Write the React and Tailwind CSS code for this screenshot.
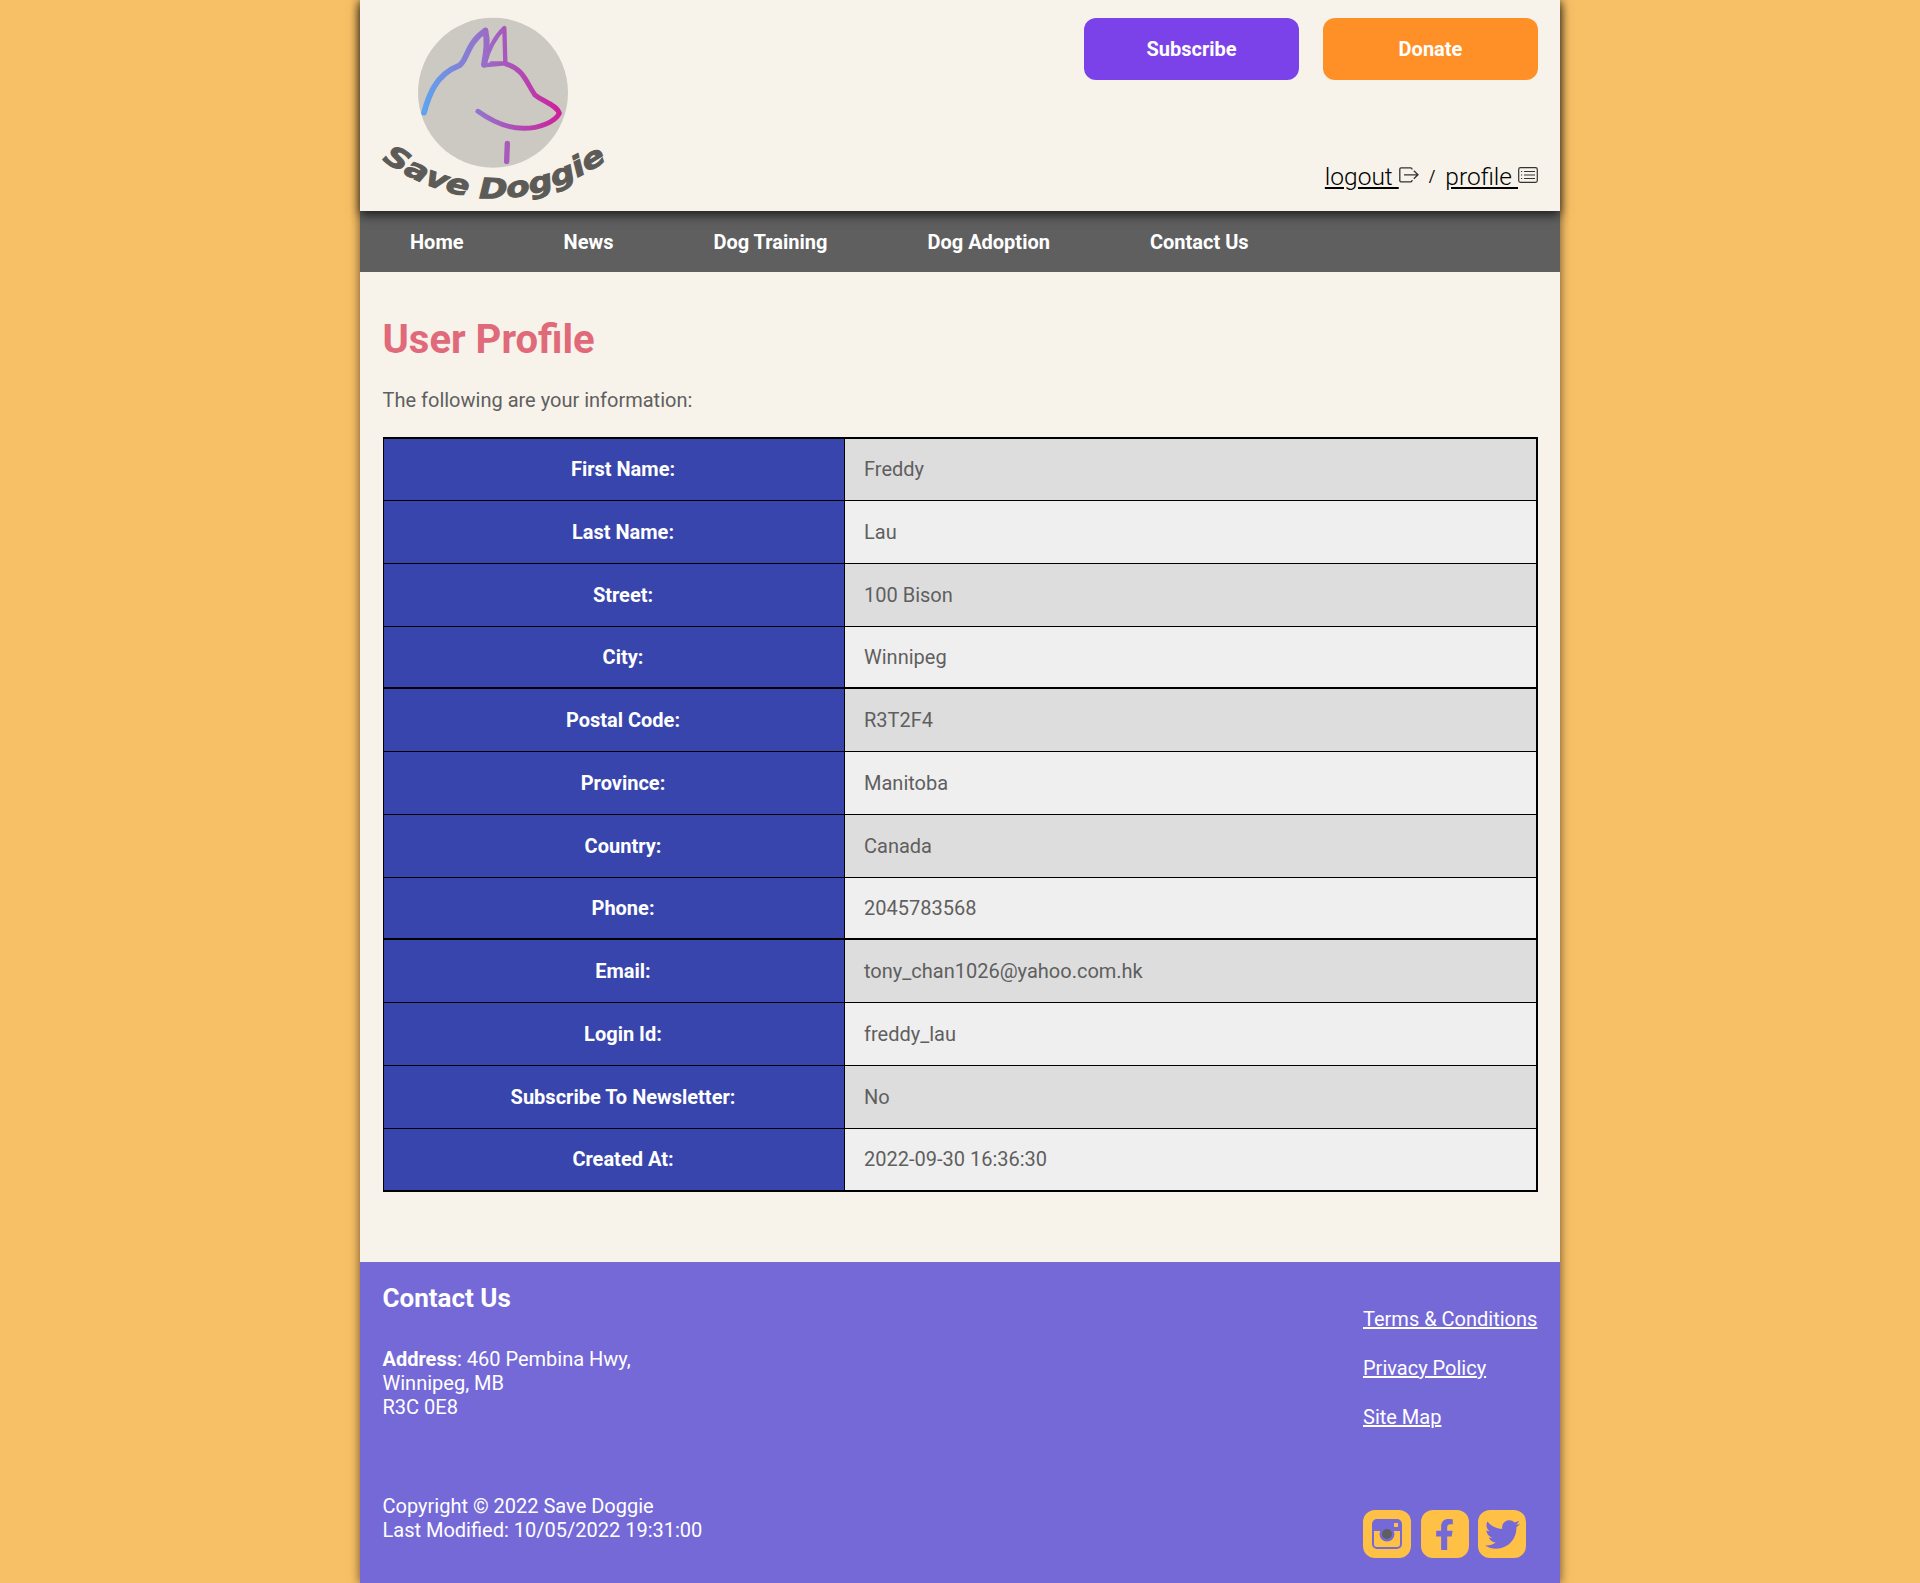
import { FaFacebookF, FaTwitter } from 'react-icons/fa';

const navLinks = ['Home', 'News', 'Dog Training', 'Dog Adoption', 'Contact Us'];

const profile = [
  ['First Name:', 'Freddy'],
  ['Last Name:', 'Lau'],
  ['Street:', '100 Bison'],
  ['City:', 'Winnipeg'],
  ['Postal Code:', 'R3T2F4'],
  ['Province:', 'Manitoba'],
  ['Country:', 'Canada'],
  ['Phone:', '2045783568'],
  ['Email:', 'tony_chan1026@yahoo.com.hk'],
  ['Login Id:', 'freddy_lau'],
  ['Subscribe To Newsletter:', 'No'],
  ['Created At:', '2022-09-30 16:36:30'],
];

function Logo() {
  return (
    <svg viewBox="0 0 900 633" className="block w-[300px] h-[211px]">
      <defs>
        <linearGradient id="dog" gradientUnits="userSpaceOnUse" x1="190" y1="0" x2="605" y2="0">
          <stop offset="0" stopColor="#5ea3f0" />
          <stop offset="0.45" stopColor="#9a6cc8" />
          <stop offset="1" stopColor="#cf1f9b" />
        </linearGradient>
        <path id="arc" d="M62 478 Q400 712 745 478" />
      </defs>
      <circle cx="399" cy="278" r="225" fill="#ccc9c2" />
      <g fill="none" stroke="url(#dog)" strokeLinecap="round" strokeLinejoin="round">
        <path strokeWidth="17" d="M192 338 C205 290 225 225 297 197 C322 185 318 130 376 92" />
        <path strokeWidth="18" d="M376 92 C385 130 378 165 372 194" />
        <path strokeWidth="13" d="M372 196 C385 150 405 110 433 84 L436 190 H394 M372 196 L436 190" />
        <path strokeWidth="15" d="M438 192 C490 205 500 250 525 285 C550 305 590 315 598 340 C585 365 540 385 490 385 C440 385 390 360 354 334" />
        <path strokeWidth="16" stroke="#a95abb" d="M442 430 L440 484" />
      </g>
      <text fontFamily="'DejaVu Sans', sans-serif" fontWeight="700" fontStyle="oblique" fontSize="84" fill="#5c5b57" stroke="#5c5b57" strokeWidth="3" textAnchor="middle">
        <textPath href="#arc" startOffset="50%" textLength="725" lengthAdjust="spacingAndGlyphs">Save Doggie</textPath>
      </text>
    </svg>
  );
}

function LogoutIcon() {
  return (
    <svg viewBox="0 0 20 16" className="w-5 h-4 text-[#333] mb-[5px]" fill="none" stroke="currentColor" strokeWidth="1.3">
      <path d="M13 2.5 V2 A1.3 1.3 0 0 0 11.7 .8 H2 A1.3 1.3 0 0 0 .8 2 V13.6 A1.3 1.3 0 0 0 2 14.8 H11.7 A1.3 1.3 0 0 0 13 13.6 V13" />
      <path d="M5 7.8 H18.5 M14.8 3.8 L19 7.8 L14.8 11.8" />
    </svg>
  );
}

function ProfileIcon() {
  return (
    <svg viewBox="0 0 20 16" className="w-5 h-4 text-[#333] mb-[5px]" fill="none" stroke="currentColor" strokeWidth="1.2">
      <rect x=".7" y=".7" width="18.6" height="14.6" rx="1.8" />
      <path d="M3 4.5 H4.2 M6 4.5 H17 M3 8 H4.2 M6 8 H17 M3 11.5 H4.2 M6 11.5 H17" />
    </svg>
  );
}

function InstagramIcon() {
  return (
    <svg viewBox="0 0 48 48" className="w-12 h-12">
      <rect width="48" height="48" rx="12" fill="#ffc145" />
      <rect x="10" y="10" width="28" height="28" rx="4" fill="none" stroke="#7569d8" strokeWidth="2" />
      <path d="M10 14 A4 4 0 0 1 14 10 H34 A4 4 0 0 1 38 14 V21 H30 A8 8 0 0 0 18 21 H10 Z" fill="#7569d8" />
      <rect x="31" y="13" width="4" height="4" fill="#ffc145" />
      <circle cx="24" cy="24" r="7.5" fill="#7569d8" />
      <circle cx="24" cy="24" r="5" fill="#5f5f5f" />
    </svg>
  );
}

export default function App() {
  return (
    <div className="min-h-screen bg-[#f8c066] font-['Roboto',sans-serif]">
      <div className="w-[1200px] mx-auto bg-[#f7f2ea] shadow-[0_0_10px_rgba(0,0,0,0.6)]">
        {/* Header */}
        <header className="relative z-10 h-[211px] flex justify-between shadow-[0_4px_10px_rgba(0,0,0,0.7)] bg-[#f7f2ea]">
          <Logo />
          <div className="flex flex-col items-end justify-between pt-[18px] pr-[22px] pb-[19px]">
            <div className="flex gap-[24px]">
              <a className="w-[215px] h-[62px] rounded-xl bg-[#7b42ea] text-white font-bold text-[20px] pb-[1px] flex items-center justify-center">Subscribe</a>
              <a className="w-[215px] h-[62px] rounded-xl bg-[#ff8f27] text-white font-bold text-[20px] pb-[1px] flex items-center justify-center">Donate</a>
            </div>
            <div className="flex items-center text-black text-[24.5px] font-light leading-[30px]">
              <a className="underline whitespace-pre">logout </a>
              <LogoutIcon />
              <span className="text-[16px] font-normal mx-[10px]">/</span>
              <a className="underline whitespace-pre">profile </a>
              <ProfileIcon />
            </div>
          </div>
        </header>

        {/* Nav */}
        <nav className="h-[61px] bg-[#5f5f5f] flex items-center pt-[1px]">
          {navLinks.map((link) => (
            <a key={link} className="px-[50px] text-white font-bold text-[20px]">{link}</a>
          ))}
        </nav>

        {/* Main */}
        <main className="px-[22.5px] pt-[44px] pb-[70px] text-[#5f5f5f]">
          <h1 className="text-[40px] leading-[47px] font-bold text-[#e0697a]">User Profile</h1>
          <p className="mt-[25px] text-[20px] leading-[24px]">The following are your information:</p>
          <table className="mt-[25px] ml-[0.5px] w-[1155px] border-collapse border-y-2 border-l border-r-2 border-black table-fixed text-[20px]">
            <tbody>
              {profile.map(([label, value], i) => (
                <tr key={label} className={i === 0 || i === 3 || i === 7 ? 'h-[62px]' : 'h-[63px]'}>
                  <th className={`w-[461px] border border-black bg-[#3845ad] text-white font-bold text-center pl-[18px] ${i === 4 || i === 8 ? 'border-t-2' : ''}`}>{label}</th>
                  <td className={`border border-black pl-[19px] ${i === 4 || i === 8 ? 'border-t-2' : ''} ${i % 2 === 0 ? 'bg-[#dddddd]' : 'bg-[#efefef]'}`}>{value}</td>
                </tr>
              ))}
            </tbody>
          </table>
        </main>

        {/* Footer */}
        <footer className="h-[322px] bg-[#7569d8] text-white px-[22.5px] pt-[21px] flex justify-between text-[20px] leading-[24px]">
          <div>
            <h2 className="text-[26px] leading-[30px] font-bold">Contact Us</h2>
            <p className="mt-[34px]"><b>Address</b>: 460 Pembina Hwy,<br />Winnipeg, MB<br />R3C 0E8</p>
            <p className="mt-[75px]">Copyright © 2022 Save Doggie<br />Last Modified: 10/05/2022 19:31:00</p>
          </div>
          <div className="w-[174.5px] pt-[24px]">
            <ul className="flex flex-col gap-[25px]">
              <li><a className="underline">Terms &amp; Conditions</a></li>
              <li><a className="underline">Privacy Policy</a></li>
              <li><a className="underline">Site Map</a></li>
            </ul>
            <div className="mt-[81px] flex gap-[9.5px]">
              <InstagramIcon />
              <div className="w-12 h-12 rounded-xl bg-[#ffc145] flex items-center justify-center text-[#7569d8]"><FaFacebookF size={31} /></div>
              <div className="w-12 h-12 rounded-xl bg-[#ffc145] flex items-center justify-center text-[#7569d8]"><FaTwitter size={35} /></div>
            </div>
          </div>
        </footer>
      </div>
    </div>
  );
}
